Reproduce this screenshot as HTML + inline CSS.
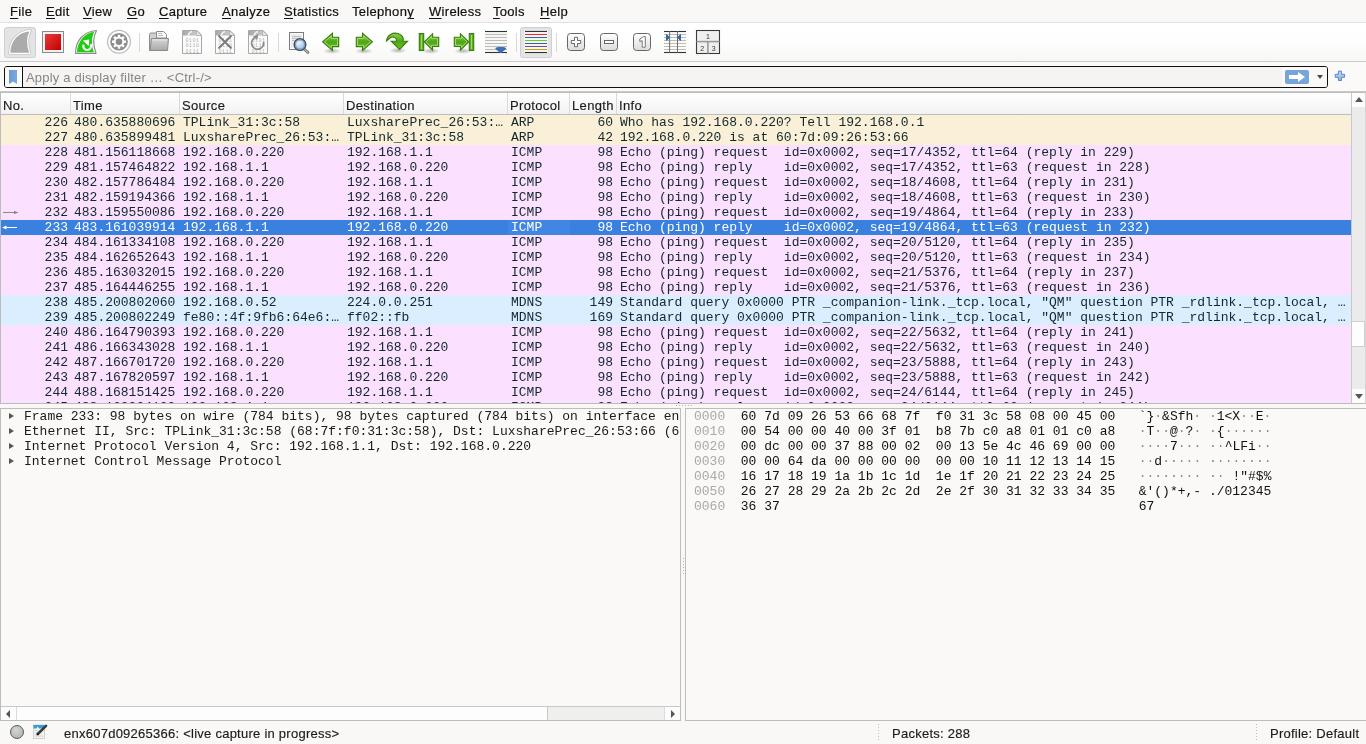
<!DOCTYPE html>
<html><head><meta charset="utf-8"><style>
html,body{margin:0;padding:0}
body{-webkit-font-smoothing:antialiased;will-change:transform;width:1366px;height:744px;overflow:hidden;position:relative;background:#f9f8f7;font-family:"Liberation Sans",sans-serif;font-size:13px;color:#1d1d1d}
#menubar{position:absolute;left:0;top:0;width:1366px;height:22px;background:#f9f8f7;border-bottom:1px solid #e2e1e0}
.mi{position:absolute;top:4px;line-height:16px;white-space:pre;color:#111;letter-spacing:0.3px;-webkit-text-stroke:0.2px #111}
.mi u{text-decoration:underline;text-underline-offset:2px;text-decoration-thickness:1px}
#toolbar{position:absolute;left:0;top:23px;width:1366px;height:38px;background:linear-gradient(#ffffff 0%,#fdfdfd 55%,#f8f7f6 100%);border-bottom:1px solid #c9c9c9}
#toolbar svg{position:absolute}
.tbtn{position:absolute;box-sizing:border-box;border:1px solid #cfcfcf;border-radius:3px;background:#e4e4e4}
.tsep{position:absolute;width:1px;background:#d9d9d9}
#filterbar{position:absolute;left:0;top:62px;width:1366px;height:29px;background:#fbfaf9;border-bottom:1px solid #c9c9c9}
#fbox{position:absolute;left:4px;top:4px;width:1324px;height:22px;box-sizing:border-box;border:1px solid #111;border-radius:3px;background:#f5f4f3;overflow:hidden}
#bm{position:absolute;left:17px;top:0;width:1px;height:20px;background:#111}
#bm:before{content:"";position:absolute;left:-13px;top:3px;width:8px;height:14px;background:linear-gradient(90deg,#6a9ad6,#7aa8de);clip-path:polygon(0 0,100% 0,100% 100%,50% 82%,0 100%)}
#bmbg{position:absolute;left:0;top:0;width:17px;height:20px;background:#fbfbfa}
#ph{position:absolute;left:21px;top:3px;line-height:16px;color:#858585;font-size:13px;letter-spacing:0.2px}
#fbtns{position:absolute;right:0;top:0;width:45px;height:20px;background:#faf9f8}
#go{position:absolute;left:1280px;top:3px;width:24px;height:14px;border-radius:2px;background:#76a5da}
#go svg{position:absolute;left:0;top:0}
#dd{position:absolute;left:1312px;top:8px;width:0;height:0;border-left:3.5px solid transparent;border-right:3.5px solid transparent;border-top:4px solid #4a4a4a}
#plus{position:absolute;left:1334px;top:8px}
#plist{position:absolute;left:0;top:92px;width:1366px;height:312px;box-sizing:border-box;border:1px solid #bcbcbc;border-right-color:#d6d6d6;background:#fff;overflow:hidden}
#phdr{position:absolute;left:0;top:0;width:1350px;height:22px;background:linear-gradient(#ffffff,#f2f2f2);border-bottom:1px solid #bdbdbd;box-sizing:border-box}
.hd{position:absolute;top:0;height:21px;box-sizing:border-box;border-right:1px solid #dadada}
.hd span{position:absolute;left:1px;top:5px;line-height:16px;color:#1a1a1a;white-space:nowrap;letter-spacing:0.35px;-webkit-text-stroke:0.15px #1a1a1a}
#prows{position:absolute;left:0;top:-93px;width:1350px;height:404px}
.row{position:absolute;left:-1px;width:1351px;height:15px;font-family:"Liberation Mono",monospace;font-size:13px;line-height:15px;color:#12272e}
.row.arp{background:#faf0d7}
.row.icmp{background:#fce0ff}
.row.udp{background:#daeeff}
.row.sel{background:#3a80df;color:#fff}
.selcell{position:absolute;left:508px;top:0;width:62px;height:15px;background:#4186e2}
.c{position:absolute;top:0;white-space:pre;overflow:hidden}
.c.r{text-align:right}
#vsb{position:absolute;left:1350px;top:0;width:14px;height:310px;background:#ebebeb;border-left:1px solid #c8c8c8}
#vsb-up,#vsb-dn{position:absolute;left:0;width:14px;height:14px;background:#fdfdfd}
#vsb-up{top:0}
#vsb-dn{top:296px}
#vsb-up:after,#vsb-dn:after{content:"";position:absolute;left:3px;width:0;height:0;border-left:4px solid transparent;border-right:4px solid transparent}
#vsb-up:after{top:4px;border-bottom:5px solid #555}
#vsb-dn:after{top:5px;border-top:5px solid #555}
#vsb-thumb{position:absolute;left:0;top:228px;width:13px;height:26px;background:#fdfdfd;border:1px solid #d0d0d0;border-left:0;box-sizing:border-box}
#splitdots{position:absolute;left:676px;top:405px;width:16px;height:1px;background:repeating-linear-gradient(90deg,#b5b5b5 0 1px,transparent 1px 3px)}
#details{position:absolute;left:0;top:408px;width:681px;height:313px;box-sizing:border-box;border:1px solid #bdbdbd;background:#faf9f8;overflow:hidden}
.dl{position:absolute;left:-1px;height:15px;width:681px;font-family:"Liberation Mono",monospace;font-size:13px;line-height:15px;color:#1a1a1a;white-space:pre}
.dl span{position:absolute;left:24px;top:0}
.tri{position:absolute;left:9px;top:4px;width:0;height:0;border-top:3.5px solid transparent;border-bottom:3.5px solid transparent;border-left:5px solid #555}
#hsb{position:absolute;left:0;top:297px;width:679px;height:14px;background:#efefee;border-top:1px solid #c8c8c8;box-sizing:border-box}
#hsb-l,#hsb-r{position:absolute;top:0;width:15px;height:13px;background:#fdfdfd}
#hsb-l{left:0;border-right:1px solid #dcdcdc}
#hsb-r{right:0;border-left:1px solid #dcdcdc}
#hsb-l:after,#hsb-r:after{content:"";position:absolute;top:3px;width:0;height:0;border-top:4px solid transparent;border-bottom:4px solid transparent}
#hsb-l:after{left:5px;border-right:4px solid #555}
#hsb-r:after{left:6px;border-left:4px solid #555}
#hsb-thumb{position:absolute;left:16px;top:0;width:531px;height:13px;background:#fdfdfd;border-right:1px solid #c9c9c9;box-sizing:border-box}
#hexpane{position:absolute;left:685px;top:408px;width:681px;height:313px;box-sizing:border-box;border:1px solid #bdbdbd;border-right:0;background:#faf9f8;overflow:hidden}
.hl{position:absolute;left:8px;height:15px;font-family:"Liberation Mono",monospace;font-size:13px;line-height:15px;color:#111;white-space:pre}
.hl .off{color:#a9a9a9}
.hl i{font-style:normal;color:#8a8a8a}
#status{position:absolute;left:0;top:721px;width:1366px;height:23px;background:#f9f8f7}
#led{position:absolute;left:10px;top:4px;width:12px;height:12px;border-radius:50%;border:1.2px solid #585c58;background:radial-gradient(circle at 40% 35%,#d4d6d4,#a9aca9)}
#edit{position:absolute;left:33px;top:3px}
#st1{-webkit-text-stroke:0.15px #1a1a1a;position:absolute;left:64px;top:5px;letter-spacing:0.25px;line-height:16px;color:#1a1a1a}
#st2{-webkit-text-stroke:0.15px #1a1a1a;position:absolute;left:892px;top:5px;letter-spacing:0.25px;line-height:16px;color:#1a1a1a}
#st3{-webkit-text-stroke:0.15px #1a1a1a;position:absolute;left:1270px;top:5px;letter-spacing:0.25px;line-height:16px;color:#1a1a1a}
.sdiv{position:absolute;top:3px;width:1px;height:18px;background:repeating-linear-gradient(#c0c0c0 0 1px,transparent 1px 3px)}

.rel{position:absolute;left:0;top:0}
#vdots{position:absolute;left:683px;top:558px;width:1px;height:16px;background:repeating-linear-gradient(#b3b3b3 0 1px,transparent 1px 3px)}

</style></head><body>
<div id="menubar"><span class="mi" style="left:10px"><u>F</u>ile</span><span class="mi" style="left:46px"><u>E</u>dit</span><span class="mi" style="left:83px"><u>V</u>iew</span><span class="mi" style="left:127px"><u>G</u>o</span><span class="mi" style="left:159px"><u>C</u>apture</span><span class="mi" style="left:222px"><u>A</u>nalyze</span><span class="mi" style="left:284px"><u>S</u>tatistics</span><span class="mi" style="left:352px">Telephon<u>y</u></span><span class="mi" style="left:429px"><u>W</u>ireless</span><span class="mi" style="left:493px"><u>T</u>ools</span><span class="mi" style="left:540px"><u>H</u>elp</span></div>
<div id="toolbar"><div class="tbtn" style="left:4px;top:4px;width:32px;height:31px"></div>
<div class="tbtn" style="left:520px;top:4px;width:32px;height:31px"></div>
<div class="tsep" style="left:139px;top:10px;height:19px"></div>
<div class="tsep" style="left:278px;top:10px;height:19px"></div>
<div class="tsep" style="left:516px;top:10px;height:19px"></div>
<div class="tsep" style="left:556px;top:10px;height:19px"></div>
<svg style="left:0;top:0" width="1366" height="38" viewBox="0 23 1366 38">
<defs>
<linearGradient id="gred" x1="0" y1="0" x2="1" y2="1"><stop offset="0" stop-color="#e83a3a"/><stop offset="1" stop-color="#c40000"/></linearGradient>
<linearGradient id="ggreen" x1="0" y1="0" x2="0" y2="1"><stop offset="0" stop-color="#8fd452"/><stop offset="0.5" stop-color="#4fa616"/><stop offset="1" stop-color="#6cc524"/></linearGradient>
<linearGradient id="gbtn" x1="0" y1="0" x2="0" y2="1"><stop offset="0" stop-color="#ffffff"/><stop offset="1" stop-color="#dcdcdc"/></linearGradient>
<linearGradient id="gfold" x1="0" y1="0" x2="1" y2="0"><stop offset="0" stop-color="#a8a8a8"/><stop offset="1" stop-color="#c8c8c8"/></linearGradient>
<radialGradient id="glens" cx="0.4" cy="0.35" r="0.7"><stop offset="0" stop-color="#eef4fb"/><stop offset="1" stop-color="#8fb3dc"/></radialGradient>
<radialGradient id="gshadow" cx="0.5" cy="0.5" r="0.5"><stop offset="0" stop-color="#000" stop-opacity="0.28"/><stop offset="1" stop-color="#000" stop-opacity="0"/></radialGradient>
<linearGradient id="gfolder" x1="0" y1="0" x2="0" y2="1"><stop offset="0" stop-color="#d6d6d6"/><stop offset="1" stop-color="#a9a9a9"/></linearGradient>
</defs>
<!-- shark fin gray (pressed) -->
<path d="M9.7 53.3 C9.8 40.5,17.5 31.5,30.5 30.5 C27.5 36,26.5 44,30 53.3 Z" fill="#ababab" stroke="#bcbcbc" stroke-width="2.6" stroke-linejoin="round"/>
<path d="M9.7 53.3 C9.8 40.5,17.5 31.5,30.5 30.5 C27.5 36,26.5 44,30 53.3 Z" fill="#ababab" stroke="#fdfdfd" stroke-width="1.3" stroke-linejoin="round"/>
<!-- stop -->
<rect x="42.5" y="31.5" width="21" height="21" fill="#f2f2f2" stroke="#8a8a8a" stroke-width="1"/>
<rect x="45" y="34" width="16" height="16" fill="url(#gred)"/>
<!-- green fin -->
<path d="M75.5 53.3 C75.6 40.5,83.5 31.5,96.5 30.5 C93.5 36,92.5 44,96 53.3 Z" fill="#fff" stroke="#8c8c8c" stroke-width="1.2" stroke-linejoin="round"/>
<path d="M77 52.3 C77.3 41.5,84.5 33.2,94.2 31.8 C91.8 37,90.8 45,94 52.3 Z" fill="#1fcc0f"/>
<path d="M83.6 44.6 A3.9 3.9 0 1 0 90.6 44.2" fill="none" stroke="#fff" stroke-width="2.1"/>
<path d="M82.8 40.6 L89.2 39.4 L88.8 46 Z" fill="#fff"/>
<!-- gear -->
<circle cx="119" cy="41.8" r="11.4" fill="#fff" stroke="#b9b9b9" stroke-width="1.2"/>
<circle cx="119" cy="41.8" r="8.8" fill="#8c8c8c"/>
<path d="M117.76 36.75 L117.80 34.80 L120.20 34.80 L120.24 36.75 L121.70 37.35 L123.10 36.00 L124.80 37.70 L123.45 39.10 L124.05 40.56 L126.00 40.60 L126.00 43.00 L124.05 43.04 L123.45 44.50 L124.80 45.90 L123.10 47.60 L121.70 46.25 L120.24 46.85 L120.20 48.80 L117.80 48.80 L117.76 46.85 L116.30 46.25 L114.90 47.60 L113.20 45.90 L114.55 44.50 L113.95 43.04 L112.00 43.00 L112.00 40.60 L113.95 40.56 L114.55 39.10 L113.20 37.70 L114.90 36.00 L116.30 37.35 Z" fill="#fff"/>
<circle cx="119" cy="41.8" r="3.3" fill="#8a8a8a"/>
<!-- open folder -->
<path d="M149.5 50.5 V34.5 Q149.5 33 151 33 H157 L158 34.5 H164 Q165.5 34.5 165.5 36 V50.5 Z" fill="#cfcfcf" stroke="#8c8c8c" stroke-width="1"/>
<path d="M156.5 38 V31.5 H163.5 L166.5 34.5 V38 Z" fill="#fafafa" stroke="#8c8c8c" stroke-width="1"/>
<line x1="158" y1="33.5" x2="162" y2="33.5" stroke="#aaa" stroke-width="0.8"/>
<line x1="158" y1="35.5" x2="163" y2="35.5" stroke="#aaa" stroke-width="0.8"/>
<path d="M150 50.5 L151.5 38.5 H168.5 L167.5 50.5 Z" fill="url(#gfolder)" stroke="#8a8a8a" stroke-width="1" stroke-linejoin="round"/>
<path d="M152.5 40 H166.5" stroke="#e8e8e8" stroke-width="1"/>
<g transform="translate(182 30)">
<path d="M0.5 0.5 H15 L19.5 5 V23.5 H0.5 Z" fill="#fbfbfb" stroke="#a9a9a9" stroke-width="1"/>
<path d="M1 1 H14.5 V5.5 H1 Z" fill="url(#gfold)"/>
<path d="M14.5 0.5 L19.5 5.5 H14.5 Z" fill="#e8e8e8" stroke="#a9a9a9" stroke-width="0.8"/>
<path d="M6 5.5 Q7.5 2 10 1.5" stroke="#f4f4f4" stroke-width="1.6" fill="none"/>
<text x="3.5" y="11.5" font-family="Liberation Mono" font-size="5.2" fill="#b5b5b5" letter-spacing="0.4">0101</text>
<text x="3.5" y="17" font-family="Liberation Mono" font-size="5.2" fill="#b5b5b5" letter-spacing="0.4">0110</text>
<text x="3.5" y="22.5" font-family="Liberation Mono" font-size="5.2" fill="#b5b5b5" letter-spacing="0.4">0111</text>
</g>
<g transform="translate(215 30)">
<path d="M0.5 0.5 H15 L19.5 5 V23.5 H0.5 Z" fill="#fbfbfb" stroke="#a9a9a9" stroke-width="1"/>
<path d="M1 1 H14.5 V5.5 H1 Z" fill="url(#gfold)"/>
<path d="M14.5 0.5 L19.5 5.5 H14.5 Z" fill="#e8e8e8" stroke="#a9a9a9" stroke-width="0.8"/>
<path d="M6 5.5 Q7.5 2 10 1.5" stroke="#f4f4f4" stroke-width="1.6" fill="none"/>
<text x="3.5" y="11.5" font-family="Liberation Mono" font-size="5.2" fill="#b5b5b5" letter-spacing="0.4">0101</text>
<text x="3.5" y="17" font-family="Liberation Mono" font-size="5.2" fill="#b5b5b5" letter-spacing="0.4">0110</text>
<text x="3.5" y="22.5" font-family="Liberation Mono" font-size="5.2" fill="#b5b5b5" letter-spacing="0.4">0111</text>
</g>
<g transform="translate(248 30)">
<path d="M0.5 0.5 H15 L19.5 5 V23.5 H0.5 Z" fill="#fbfbfb" stroke="#a9a9a9" stroke-width="1"/>
<path d="M1 1 H14.5 V5.5 H1 Z" fill="url(#gfold)"/>
<path d="M14.5 0.5 L19.5 5.5 H14.5 Z" fill="#e8e8e8" stroke="#a9a9a9" stroke-width="0.8"/>
<path d="M6 5.5 Q7.5 2 10 1.5" stroke="#f4f4f4" stroke-width="1.6" fill="none"/>
<text x="3.5" y="11.5" font-family="Liberation Mono" font-size="5.2" fill="#b5b5b5" letter-spacing="0.4">0101</text>
<text x="3.5" y="17" font-family="Liberation Mono" font-size="5.2" fill="#b5b5b5" letter-spacing="0.4">0110</text>
<text x="3.5" y="22.5" font-family="Liberation Mono" font-size="5.2" fill="#b5b5b5" letter-spacing="0.4">0111</text>
</g>
<!-- X on close -->
<path d="M218.5 35.5 L231.5 48.5 M231.5 35.5 L218.5 48.5" stroke="#7a7a7a" stroke-width="1.8"/>
<!-- reload arrow -->
<path d="M254.5 38 A6 6 0 1 0 263.5 42" fill="none" stroke="#8a8a8a" stroke-width="1.7"/>
<path d="M252.6 36.8 L258.5 34.3 L257.2 39.8 Z" fill="#8a8a8a"/>
<!-- find -->
<rect x="289.5" y="32.5" width="14" height="17" fill="#fbfbfb" stroke="#7c7c7c" stroke-width="1"/>
<rect x="291" y="34" width="11" height="14" fill="#ececec"/>
<line x1="292" y1="36.5" x2="301" y2="36.5" stroke="#b5b5b5" stroke-width="0.8"/>
<line x1="292" y1="38.5" x2="299" y2="38.5" stroke="#b5b5b5" stroke-width="0.8"/>
<line x1="292" y1="40.5" x2="297" y2="40.5" stroke="#b5b5b5" stroke-width="0.8"/>
<line x1="303.5" y1="48.5" x2="308" y2="52.5" stroke="#6a6a6a" stroke-width="2.6" stroke-linecap="round"/>
<line x1="303.5" y1="48.5" x2="308" y2="52.5" stroke="#e0e0e0" stroke-width="1" stroke-linecap="round"/>
<circle cx="300" cy="44.6" r="5.8" fill="url(#glens)" stroke="#4a4a4a" stroke-width="1.4"/>
<circle cx="300" cy="44.6" r="4.6" fill="none" stroke="#6d9ad6" stroke-width="1.2"/>
<!-- shadows -->
<ellipse cx="332" cy="51" rx="9" ry="3" fill="url(#gshadow)"/>
<ellipse cx="364" cy="51" rx="9" ry="3" fill="url(#gshadow)"/>
<ellipse cx="398" cy="50.5" rx="9" ry="3" fill="url(#gshadow)"/>
<ellipse cx="431" cy="51" rx="9" ry="3" fill="url(#gshadow)"/>
<ellipse cx="463" cy="51" rx="9" ry="3" fill="url(#gshadow)"/>
<!-- back -->
<path d="M322.5 41.8 L332.5 33.3 V37.3 H338.7 V46.6 H332.5 V50.5 Z" fill="url(#ggreen)" stroke="#3b7e0b" stroke-width="1.1" stroke-linejoin="miter"/>
<path d="M324.4 41.8 L331.3 35.9 V38.5 H337.5 V45.4 H331.3 V47.8 Z" fill="none" stroke="#a6dc78" stroke-width="0.9"/>
<!-- fwd -->
<path d="M372.5 41.8 L362.5 33.3 V37.3 H356.3 V46.6 H362.5 V50.5 Z" fill="url(#ggreen)" stroke="#3b7e0b" stroke-width="1.1"/>
<path d="M370.6 41.8 L363.7 35.9 V38.5 H357.5 V45.4 H363.7 V47.8 Z" fill="none" stroke="#a6dc78" stroke-width="0.9"/>
<!-- jump -->
<path d="M386.5 41 C387 35,393 32,398 33.5 C402 35,404 38,403 41.2 H407.5 L399.6 49.4 L391.3 41.2 H396.5 C397 38.5,394 35.5,390 38 Z" fill="url(#ggreen)" stroke="#3b7e0b" stroke-width="1.1" stroke-linejoin="miter"/>
<!-- first -->
<rect x="419.3" y="33.5" width="4.4" height="17" fill="#5cb01e" stroke="#3b7e0b" stroke-width="1.1"/>
<line x1="421.5" y1="35" x2="421.5" y2="49" stroke="#a6dc78" stroke-width="0.9"/>
<path d="M424.2 41.8 L432.6 33.7 V37.2 H438.7 V46.5 H432.6 V50.2 Z" fill="url(#ggreen)" stroke="#3b7e0b" stroke-width="1.1"/>
<path d="M426 41.8 L431.5 36.4 V38.4 H437.5 V45.3 H431.5 V47.5 Z" fill="none" stroke="#a6dc78" stroke-width="0.9"/>
<!-- last -->
<rect x="469.3" y="33.5" width="4.4" height="17" fill="#5cb01e" stroke="#3b7e0b" stroke-width="1.1"/>
<line x1="471.5" y1="35" x2="471.5" y2="49" stroke="#a6dc78" stroke-width="0.9"/>
<path d="M468.8 41.8 L460.4 33.7 V37.2 H454.3 V46.5 H460.4 V50.2 Z" fill="url(#ggreen)" stroke="#3b7e0b" stroke-width="1.1"/>
<path d="M467 41.8 L461.5 36.4 V38.4 H455.5 V45.3 H461.5 V47.5 Z" fill="none" stroke="#a6dc78" stroke-width="0.9"/>
<!-- autoscroll -->
<rect x="485" y="31" width="22" height="22" fill="#fafafa"/>
<g stroke-width="1.1">
<line x1="485" y1="31.5" x2="507" y2="31.5" stroke="#2e3436"/>
<line x1="485" y1="34.5" x2="507" y2="34.5" stroke="#bdbdb5"/>
<line x1="485" y1="37.5" x2="507" y2="37.5" stroke="#bdbdb5"/>
<line x1="485" y1="40.5" x2="507" y2="40.5" stroke="#bdbdb5"/>
<line x1="485" y1="43.5" x2="507" y2="43.5" stroke="#bdbdb5"/>
<line x1="485" y1="46.5" x2="507" y2="46.5" stroke="#bdbdb5"/>
<line x1="485" y1="49.5" x2="507" y2="49.5" stroke="#bdbdb5"/>
<line x1="485" y1="52.5" x2="507" y2="52.5" stroke="#2e3436"/>
</g>
<path d="M495.3 48.3 C495.3 46.6 506.2 46.6 506.2 48.3 C506.2 49.8 502.6 51.2 501.6 53 H499.9 C498.9 51.2 495.3 49.8 495.3 48.3 Z" fill="#3d6fb5"/>
<!-- colorize lines -->
<rect x="524.5" y="31" width="23" height="22" fill="#fbfbfb"/>
<g stroke-width="1.1">
<line x1="525" y1="31.5" x2="547" y2="31.5" stroke="#2e3436"/>
<line x1="525" y1="34.5" x2="547" y2="34.5" stroke="#ef2929"/>
<line x1="525" y1="37.5" x2="547" y2="37.5" stroke="#3465a4"/>
<line x1="525" y1="40.5" x2="547" y2="40.5" stroke="#6ad20e"/>
<line x1="525" y1="43.5" x2="547" y2="43.5" stroke="#3465a4"/>
<line x1="525" y1="46.5" x2="547" y2="46.5" stroke="#75507b"/>
<line x1="525" y1="49.5" x2="547" y2="49.5" stroke="#c4a000"/>
<line x1="525" y1="52.5" x2="547" y2="52.5" stroke="#2e3436"/>
</g>
<!-- zoom buttons -->
<rect x="567.5" y="33.5" width="17" height="17" rx="3" fill="url(#gbtn)" stroke="#666" stroke-width="1"/>
<path d="M574.5 37.3 H577.5 V40.5 H580.7 V43.5 H577.5 V46.7 H574.5 V43.5 H571.3 V40.5 H574.5 Z" fill="#fff" stroke="#6a6a6a" stroke-width="1"/>
<rect x="600.5" y="33.5" width="17" height="17" rx="3" fill="url(#gbtn)" stroke="#666" stroke-width="1"/>
<rect x="604.5" y="40.5" width="9" height="3" fill="#fff" stroke="#666" stroke-width="1"/>
<rect x="633.5" y="33.5" width="17" height="17" rx="3" fill="url(#gbtn)" stroke="#666" stroke-width="1"/>
<path d="M639.8 39 L643.5 36.6 H645.3 V47.2 H642.2 V40.6 L639.8 41.6 Z" fill="#fff" stroke="#777" stroke-width="1" stroke-linejoin="round"/>
<!-- resize columns -->
<rect x="664" y="31" width="22" height="22" fill="#fafafa"/>
<g stroke="#bdbdb2" stroke-width="1">
<line x1="664" y1="34.5" x2="686" y2="34.5"/><line x1="664" y1="37.5" x2="686" y2="37.5"/><line x1="664" y1="40.5" x2="686" y2="40.5"/><line x1="664" y1="43.5" x2="686" y2="43.5"/><line x1="664" y1="46.5" x2="686" y2="46.5"/><line x1="664" y1="49.5" x2="686" y2="49.5"/>
</g>
<line x1="664" y1="31.5" x2="686" y2="31.5" stroke="#2e3436" stroke-width="1.1"/>
<line x1="664" y1="52.5" x2="686" y2="52.5" stroke="#2e3436" stroke-width="1.1"/>
<line x1="669.6" y1="31" x2="669.6" y2="53" stroke="#6e6e6a" stroke-width="1"/>
<line x1="677.5" y1="31" x2="677.5" y2="53" stroke="#6e6e6a" stroke-width="1"/>
<path d="M666 34.5 Q666 34 666.8 34.3 L670 37.5 L666.8 40.7 Q666 41 666 40.5 Z" fill="#3465a4"/>
<path d="M681 34.5 Q681 34 680.2 34.3 L677 37.5 L680.2 40.7 Q681 41 681 40.5 Z" fill="#3465a4"/>
<!-- layout -->
<rect x="696.5" y="30.5" width="23" height="23" fill="#efefef" stroke="#3c3c3c" stroke-width="1.1"/>
<line x1="696.5" y1="41.6" x2="719.5" y2="41.6" stroke="#9a9a9a" stroke-width="1.6"/>
<line x1="707.9" y1="41.6" x2="707.9" y2="53.5" stroke="#9a9a9a" stroke-width="1.6"/>
<text x="708" y="39.2" font-family="Liberation Sans" font-size="7" text-anchor="middle" fill="#333">1</text>
<text x="702.2" y="50.6" font-family="Liberation Sans" font-size="7" text-anchor="middle" fill="#333">2</text>
<text x="713.8" y="50.6" font-family="Liberation Sans" font-size="7" text-anchor="middle" fill="#333">3</text>
</svg>
</div>
<div id="filterbar">
 <div id="fbox"><div id="bmbg"></div><div id="bm"></div><span id="ph">Apply a display filter … &lt;Ctrl-/&gt;</span><div id="fbtns"></div>
 <div id="go"><svg width="24" height="14" viewBox="0 0 24 14"><path d="M4 5 H13 V2 L20 7 L13 12 V9 H4 Z" fill="#fff"/></svg></div>
 <div id="dd"></div></div>
 <svg id="plus" width="12" height="12" viewBox="0 0 12 12"><defs><linearGradient id="gplus" x1="0" y1="0" x2="0" y2="1"><stop offset="0" stop-color="#c9dbf1"/><stop offset="1" stop-color="#8db2df"/></linearGradient></defs><path d="M4.4 1.1 H7.4 V4.3 H10.6 V7.3 H7.4 V10.5 H4.4 V7.3 H1.2 V4.3 H4.4 Z" fill="url(#gplus)" stroke="#5587c8" stroke-width="1"/></svg>
</div>
<div id="plist">
 <div id="phdr"><div class="hd" style="left:1px;width:69px"><span>No.</span></div><div class="hd" style="left:71px;width:108px"><span>Time</span></div><div class="hd" style="left:180px;width:163px"><span>Source</span></div><div class="hd" style="left:344px;width:163px"><span>Destination</span></div><div class="hd" style="left:508px;width:61px"><span>Protocol</span></div><div class="hd" style="left:570px;width:46px"><span>Length</span></div><div class="hd" style="left:617px;width:734px"><span>Info</span></div></div>
 <div id="prows"><div class="row arp" style="top:115px"><span class="c r" style="left:1px;width:67px">226</span><span class="c" style="left:74px;width:104px">480.635880696</span><span class="c" style="left:183px;width:159px">TPLink_31:3c:58</span><span class="c" style="left:347px;width:159px">LuxsharePrec_26:53:…</span><span class="c" style="left:511px;width:57px">ARP</span><span class="c r" style="left:570px;width:43px">60</span><span class="c" style="left:620px;width:729px">Who has 192.168.0.220? Tell 192.168.0.1</span></div><div class="row arp" style="top:130px"><span class="c r" style="left:1px;width:67px">227</span><span class="c" style="left:74px;width:104px">480.635899481</span><span class="c" style="left:183px;width:159px">LuxsharePrec_26:53:…</span><span class="c" style="left:347px;width:159px">TPLink_31:3c:58</span><span class="c" style="left:511px;width:57px">ARP</span><span class="c r" style="left:570px;width:43px">42</span><span class="c" style="left:620px;width:729px">192.168.0.220 is at 60:7d:09:26:53:66</span></div><div class="row icmp" style="top:145px"><span class="c r" style="left:1px;width:67px">228</span><span class="c" style="left:74px;width:104px">481.156118668</span><span class="c" style="left:183px;width:159px">192.168.0.220</span><span class="c" style="left:347px;width:159px">192.168.1.1</span><span class="c" style="left:511px;width:57px">ICMP</span><span class="c r" style="left:570px;width:43px">98</span><span class="c" style="left:620px;width:729px">Echo (ping) request  id=0x0002, seq=17/4352, ttl=64 (reply in 229)</span></div><div class="row icmp" style="top:160px"><span class="c r" style="left:1px;width:67px">229</span><span class="c" style="left:74px;width:104px">481.157464822</span><span class="c" style="left:183px;width:159px">192.168.1.1</span><span class="c" style="left:347px;width:159px">192.168.0.220</span><span class="c" style="left:511px;width:57px">ICMP</span><span class="c r" style="left:570px;width:43px">98</span><span class="c" style="left:620px;width:729px">Echo (ping) reply    id=0x0002, seq=17/4352, ttl=63 (request in 228)</span></div><div class="row icmp" style="top:175px"><span class="c r" style="left:1px;width:67px">230</span><span class="c" style="left:74px;width:104px">482.157786484</span><span class="c" style="left:183px;width:159px">192.168.0.220</span><span class="c" style="left:347px;width:159px">192.168.1.1</span><span class="c" style="left:511px;width:57px">ICMP</span><span class="c r" style="left:570px;width:43px">98</span><span class="c" style="left:620px;width:729px">Echo (ping) request  id=0x0002, seq=18/4608, ttl=64 (reply in 231)</span></div><div class="row icmp" style="top:190px"><span class="c r" style="left:1px;width:67px">231</span><span class="c" style="left:74px;width:104px">482.159194366</span><span class="c" style="left:183px;width:159px">192.168.1.1</span><span class="c" style="left:347px;width:159px">192.168.0.220</span><span class="c" style="left:511px;width:57px">ICMP</span><span class="c r" style="left:570px;width:43px">98</span><span class="c" style="left:620px;width:729px">Echo (ping) reply    id=0x0002, seq=18/4608, ttl=63 (request in 230)</span></div><div class="row icmp" style="top:205px"><svg class="rel" width="20" height="15" viewBox="0 0 20 15"><line x1="3" y1="7.5" x2="15" y2="7.5" stroke="#8a8a8a" stroke-width="1"/><path d="M18.5 7.5 L14 5.7 V9.3 Z" fill="#8a8a8a"/></svg><span class="c r" style="left:1px;width:67px">232</span><span class="c" style="left:74px;width:104px">483.159550086</span><span class="c" style="left:183px;width:159px">192.168.0.220</span><span class="c" style="left:347px;width:159px">192.168.1.1</span><span class="c" style="left:511px;width:57px">ICMP</span><span class="c r" style="left:570px;width:43px">98</span><span class="c" style="left:620px;width:729px">Echo (ping) request  id=0x0002, seq=19/4864, ttl=64 (reply in 233)</span></div><div class="row sel" style="top:220px"><div class="selcell"></div><svg class="rel" width="20" height="15" viewBox="0 0 20 15"><line x1="4" y1="7.5" x2="17" y2="7.5" stroke="#fff" stroke-width="1"/><path d="M2 7.5 L6.5 5.5 V9.5 Z" fill="#fff"/></svg><span class="c r" style="left:1px;width:67px">233</span><span class="c" style="left:74px;width:104px">483.161039914</span><span class="c" style="left:183px;width:159px">192.168.1.1</span><span class="c" style="left:347px;width:159px">192.168.0.220</span><span class="c" style="left:511px;width:57px">ICMP</span><span class="c r" style="left:570px;width:43px">98</span><span class="c" style="left:620px;width:729px">Echo (ping) reply    id=0x0002, seq=19/4864, ttl=63 (request in 232)</span></div><div class="row icmp" style="top:235px"><span class="c r" style="left:1px;width:67px">234</span><span class="c" style="left:74px;width:104px">484.161334108</span><span class="c" style="left:183px;width:159px">192.168.0.220</span><span class="c" style="left:347px;width:159px">192.168.1.1</span><span class="c" style="left:511px;width:57px">ICMP</span><span class="c r" style="left:570px;width:43px">98</span><span class="c" style="left:620px;width:729px">Echo (ping) request  id=0x0002, seq=20/5120, ttl=64 (reply in 235)</span></div><div class="row icmp" style="top:250px"><span class="c r" style="left:1px;width:67px">235</span><span class="c" style="left:74px;width:104px">484.162652643</span><span class="c" style="left:183px;width:159px">192.168.1.1</span><span class="c" style="left:347px;width:159px">192.168.0.220</span><span class="c" style="left:511px;width:57px">ICMP</span><span class="c r" style="left:570px;width:43px">98</span><span class="c" style="left:620px;width:729px">Echo (ping) reply    id=0x0002, seq=20/5120, ttl=63 (request in 234)</span></div><div class="row icmp" style="top:265px"><span class="c r" style="left:1px;width:67px">236</span><span class="c" style="left:74px;width:104px">485.163032015</span><span class="c" style="left:183px;width:159px">192.168.0.220</span><span class="c" style="left:347px;width:159px">192.168.1.1</span><span class="c" style="left:511px;width:57px">ICMP</span><span class="c r" style="left:570px;width:43px">98</span><span class="c" style="left:620px;width:729px">Echo (ping) request  id=0x0002, seq=21/5376, ttl=64 (reply in 237)</span></div><div class="row icmp" style="top:280px"><span class="c r" style="left:1px;width:67px">237</span><span class="c" style="left:74px;width:104px">485.164446255</span><span class="c" style="left:183px;width:159px">192.168.1.1</span><span class="c" style="left:347px;width:159px">192.168.0.220</span><span class="c" style="left:511px;width:57px">ICMP</span><span class="c r" style="left:570px;width:43px">98</span><span class="c" style="left:620px;width:729px">Echo (ping) reply    id=0x0002, seq=21/5376, ttl=63 (request in 236)</span></div><div class="row udp" style="top:295px"><span class="c r" style="left:1px;width:67px">238</span><span class="c" style="left:74px;width:104px">485.200802060</span><span class="c" style="left:183px;width:159px">192.168.0.52</span><span class="c" style="left:347px;width:159px">224.0.0.251</span><span class="c" style="left:511px;width:57px">MDNS</span><span class="c r" style="left:570px;width:43px">149</span><span class="c" style="left:620px;width:729px">Standard query 0x0000 PTR _companion-link._tcp.local, "QM" question PTR _rdlink._tcp.local, …</span></div><div class="row udp" style="top:310px"><span class="c r" style="left:1px;width:67px">239</span><span class="c" style="left:74px;width:104px">485.200802249</span><span class="c" style="left:183px;width:159px">fe80::4f:9fb6:64e6:…</span><span class="c" style="left:347px;width:159px">ff02::fb</span><span class="c" style="left:511px;width:57px">MDNS</span><span class="c r" style="left:570px;width:43px">169</span><span class="c" style="left:620px;width:729px">Standard query 0x0000 PTR _companion-link._tcp.local, "QM" question PTR _rdlink._tcp.local, …</span></div><div class="row icmp" style="top:325px"><span class="c r" style="left:1px;width:67px">240</span><span class="c" style="left:74px;width:104px">486.164790393</span><span class="c" style="left:183px;width:159px">192.168.0.220</span><span class="c" style="left:347px;width:159px">192.168.1.1</span><span class="c" style="left:511px;width:57px">ICMP</span><span class="c r" style="left:570px;width:43px">98</span><span class="c" style="left:620px;width:729px">Echo (ping) request  id=0x0002, seq=22/5632, ttl=64 (reply in 241)</span></div><div class="row icmp" style="top:340px"><span class="c r" style="left:1px;width:67px">241</span><span class="c" style="left:74px;width:104px">486.166343028</span><span class="c" style="left:183px;width:159px">192.168.1.1</span><span class="c" style="left:347px;width:159px">192.168.0.220</span><span class="c" style="left:511px;width:57px">ICMP</span><span class="c r" style="left:570px;width:43px">98</span><span class="c" style="left:620px;width:729px">Echo (ping) reply    id=0x0002, seq=22/5632, ttl=63 (request in 240)</span></div><div class="row icmp" style="top:355px"><span class="c r" style="left:1px;width:67px">242</span><span class="c" style="left:74px;width:104px">487.166701720</span><span class="c" style="left:183px;width:159px">192.168.0.220</span><span class="c" style="left:347px;width:159px">192.168.1.1</span><span class="c" style="left:511px;width:57px">ICMP</span><span class="c r" style="left:570px;width:43px">98</span><span class="c" style="left:620px;width:729px">Echo (ping) request  id=0x0002, seq=23/5888, ttl=64 (reply in 243)</span></div><div class="row icmp" style="top:370px"><span class="c r" style="left:1px;width:67px">243</span><span class="c" style="left:74px;width:104px">487.167820597</span><span class="c" style="left:183px;width:159px">192.168.1.1</span><span class="c" style="left:347px;width:159px">192.168.0.220</span><span class="c" style="left:511px;width:57px">ICMP</span><span class="c r" style="left:570px;width:43px">98</span><span class="c" style="left:620px;width:729px">Echo (ping) reply    id=0x0002, seq=23/5888, ttl=63 (request in 242)</span></div><div class="row icmp" style="top:385px"><span class="c r" style="left:1px;width:67px">244</span><span class="c" style="left:74px;width:104px">488.168151425</span><span class="c" style="left:183px;width:159px">192.168.0.220</span><span class="c" style="left:347px;width:159px">192.168.1.1</span><span class="c" style="left:511px;width:57px">ICMP</span><span class="c r" style="left:570px;width:43px">98</span><span class="c" style="left:620px;width:729px">Echo (ping) request  id=0x0002, seq=24/6144, ttl=64 (reply in 245)</span></div><div class="row icmp" style="top:400px"><span class="c r" style="left:1px;width:67px">245</span><span class="c" style="left:74px;width:104px">488.169934129</span><span class="c" style="left:183px;width:159px">192.168.1.1</span><span class="c" style="left:347px;width:159px">192.168.0.220</span><span class="c" style="left:511px;width:57px">ICMP</span><span class="c r" style="left:570px;width:43px">98</span><span class="c" style="left:620px;width:729px">Echo (ping) reply    id=0x0002, seq=24/6144, ttl=63 (request in 244)</span></div>
 <div class="row icmp" style="top:400px"><span class="c r" style="left:1px;width:67px">245</span><span class="c" style="left:74px">488.169934129</span><span class="c" style="left:183px">192.168.1.1</span><span class="c" style="left:347px">192.168.0.220</span><span class="c" style="left:511px">ICMP</span><span class="c r" style="left:570px;width:43px">98</span><span class="c" style="left:620px">Echo (ping) reply    id=0x0002, seq=24/6144, ttl=63 (request in 244)</span></div>
 </div>
 <div id="vsb"><div id="vsb-up"></div><div id="vsb-thumb"></div><div id="vsb-dn"></div></div>
</div>
<div id="arrows"></div>
<div id="splitdots"></div>
<div id="details"><div class="dl" style="top:0px"><b class="tri"></b><span>Frame 233: 98 bytes on wire (784 bits), 98 bytes captured (784 bits) on interface enx607d09265366, id 0</span></div><div class="dl" style="top:15px"><b class="tri"></b><span>Ethernet II, Src: TPLink_31:3c:58 (68:7f:f0:31:3c:58), Dst: LuxsharePrec_26:53:66 (60:7d:09:26:53:66)</span></div><div class="dl" style="top:30px"><b class="tri"></b><span>Internet Protocol Version 4, Src: 192.168.1.1, Dst: 192.168.0.220</span></div><div class="dl" style="top:45px"><b class="tri"></b><span>Internet Control Message Protocol</span></div>
 <div id="hsb"><div id="hsb-l"></div><div id="hsb-thumb"></div><div id="hsb-r"></div></div>
</div>
<div id="vsplit"></div><div id="vdots"></div>
<div id="hexpane"><div class="hl" style="top:0px"><span class="off">0000</span>  60 7d 09 26 53 66 68 7f  f0 31 3c 58 08 00 45 00   `}<i>·</i>&amp;Sfh<i>·</i> <i>·</i>1&lt;X<i>·</i><i>·</i>E<i>·</i></div><div class="hl" style="top:15px"><span class="off">0010</span>  00 54 00 00 40 00 3f 01  b8 7b c0 a8 01 01 c0 a8   <i>·</i>T<i>·</i><i>·</i>@<i>·</i>?<i>·</i> <i>·</i>{<i>·</i><i>·</i><i>·</i><i>·</i><i>·</i><i>·</i></div><div class="hl" style="top:30px"><span class="off">0020</span>  00 dc 00 00 37 88 00 02  00 13 5e 4c 46 69 00 00   <i>·</i><i>·</i><i>·</i><i>·</i>7<i>·</i><i>·</i><i>·</i> <i>·</i><i>·</i>^LFi<i>·</i><i>·</i></div><div class="hl" style="top:45px"><span class="off">0030</span>  00 00 64 da 00 00 00 00  00 00 10 11 12 13 14 15   <i>·</i><i>·</i>d<i>·</i><i>·</i><i>·</i><i>·</i><i>·</i> <i>·</i><i>·</i><i>·</i><i>·</i><i>·</i><i>·</i><i>·</i><i>·</i></div><div class="hl" style="top:60px"><span class="off">0040</span>  16 17 18 19 1a 1b 1c 1d  1e 1f 20 21 22 23 24 25   <i>·</i><i>·</i><i>·</i><i>·</i><i>·</i><i>·</i><i>·</i><i>·</i> <i>·</i><i>·</i> !"#$%</div><div class="hl" style="top:75px"><span class="off">0050</span>  26 27 28 29 2a 2b 2c 2d  2e 2f 30 31 32 33 34 35   &amp;'()*+,- ./012345</div><div class="hl" style="top:90px"><span class="off">0060</span>  36 37                                              67</div></div>
<div id="status">
 <div id="led"></div>
 <svg id="edit" width="16" height="16" viewBox="33 724 16 16"><rect x="33.5" y="725" width="11" height="13.5" fill="#f2f2ee" stroke="#c9c9c4" stroke-width="0.8"/><path d="M33.5 725 H44.5 V728.6 H39 L37.5 726.5 L36.5 728.6 H33.5 Z" fill="#3c9bdb"/><g stroke="#cfcfc8" stroke-width="0.9"><line x1="35" y1="730.5" x2="38" y2="730.5"/><line x1="35" y1="733" x2="37" y2="733"/><line x1="35" y1="736" x2="43" y2="736"/></g><line x1="37.8" y1="734" x2="46" y2="725.8" stroke="#3a3a3a" stroke-width="2.6" stroke-linecap="round"/><path d="M36.6 735.3 L37.3 733 L38.9 734.6 Z" fill="#111"/></svg>
 <span id="st1">enx607d09265366: &lt;live capture in progress&gt;</span>
 <div class="sdiv" style="left:878px"></div>
 <span id="st2">Packets: 288</span>
 <div class="sdiv" style="left:1256px"></div>
 <span id="st3">Profile: Default</span>
</div>
</body></html>
